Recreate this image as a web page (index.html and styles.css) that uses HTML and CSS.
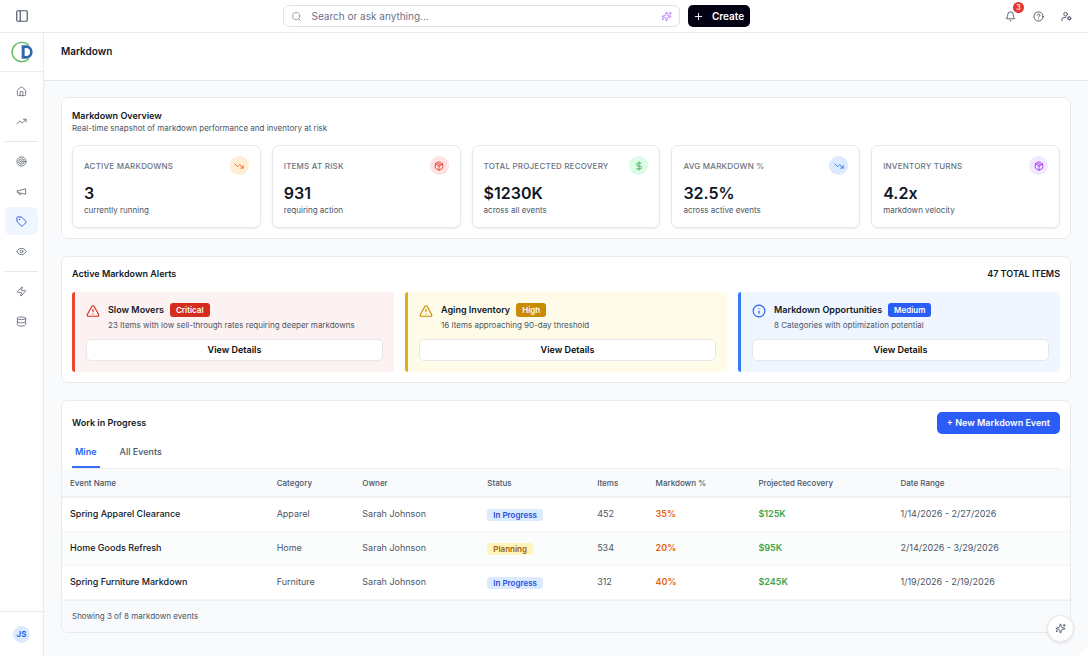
FILE: index.html
```html
<!DOCTYPE html>
<html lang="en">
<head>
<meta charset="utf-8">
<meta name="viewport" content="width=device-width, initial-scale=1">
<title>Markdown</title>
<link rel="stylesheet" href="styles.css">
</head>
<body>
<svg class="defs" aria-hidden="true">
  <symbol id="i-panel" viewBox="0 0 24 24"><rect x="3" y="3" width="18" height="18" rx="2"/><path d="M9 3v18"/></symbol>
  <symbol id="i-search" viewBox="0 0 24 24"><circle cx="11" cy="11" r="8"/><path d="m21 21-4.3-4.3"/></symbol>
  <symbol id="i-sparkles" viewBox="0 0 24 24"><path d="M9.937 15.5A2 2 0 0 0 8.5 14.063l-6.135-1.582a.5.5 0 0 1 0-.962L8.5 9.936A2 2 0 0 0 9.937 8.5l1.582-6.135a.5.5 0 0 1 .963 0L14.063 8.5A2 2 0 0 0 15.5 9.937l6.135 1.581a.5.5 0 0 1 0 .964L15.5 14.063a2 2 0 0 0-1.437 1.437l-1.582 6.135a.5.5 0 0 1-.963 0z"/><path d="M20 3v4M22 5h-4M4 17v2M5 18H3"/></symbol>
  <symbol id="i-plus" viewBox="0 0 24 24"><path d="M5 12h14M12 5v14"/></symbol>
  <symbol id="i-bell" viewBox="0 0 24 24"><path d="M10.268 21a2 2 0 0 0 3.464 0"/><path d="M3.262 15.326A1 1 0 0 0 4 17h16a1 1 0 0 0 .74-1.673C19.41 13.956 18 12.499 18 8A6 6 0 0 0 6 8c0 4.499-1.411 5.956-2.738 7.326"/></symbol>
  <symbol id="i-help" viewBox="0 0 24 24"><circle cx="12" cy="12" r="10"/><path d="M9.09 9a3 3 0 0 1 5.83 1c0 2-3 3-3 3M12 17h.01"/></symbol>
  <symbol id="i-usercog" viewBox="0 0 24 24"><circle cx="10" cy="7" r="4"/><path d="M2 21v-2a5 5 0 0 1 5-5h4"/><circle cx="18" cy="16" r="3"/><path d="M18 12v1M18 19v1M22 16h-1M15 16h-1M20.8 13.2l-.7.7M15.9 18.1l-.7.7M20.8 18.8l-.7-.7M15.9 13.9l-.7-.7"/></symbol>
  <symbol id="i-home" viewBox="0 0 24 24"><path d="M15 21v-8a1 1 0 0 0-1-1h-4a1 1 0 0 0-1 1v8"/><path d="M3 10a2 2 0 0 1 .709-1.528l7-6a2 2 0 0 1 2.582 0l7 6A2 2 0 0 1 21 10v9a2 2 0 0 1-2 2H5a2 2 0 0 1-2-2z"/></symbol>
  <symbol id="i-up" viewBox="0 0 24 24"><path d="m22 7-8.5 8.5-5-5L2 17"/><path d="M16 7h6v6"/></symbol>
  <symbol id="i-down" viewBox="0 0 24 24"><path d="m22 17-8.5-8.5-5 5L2 7"/><path d="M16 17h6v-6"/></symbol>
  <symbol id="i-target" viewBox="0 0 24 24"><circle cx="12" cy="12" r="10"/><circle cx="12" cy="12" r="6"/><circle cx="12" cy="12" r="2"/></symbol>
  <symbol id="i-megaphone" viewBox="0 0 24 24"><path d="m3 11 18-5v12L3 14v-3z"/><path d="M11.6 16.8a3 3 0 1 1-5.8-1.6"/></symbol>
  <symbol id="i-tag" viewBox="0 0 24 24"><path d="M12.586 2.586A2 2 0 0 0 11.172 2H4a2 2 0 0 0-2 2v7.172a2 2 0 0 0 .586 1.414l8.704 8.704a2.426 2.426 0 0 0 3.42 0l6.58-6.58a2.426 2.426 0 0 0 0-3.42z"/><circle cx="7.5" cy="7.5" r=".5"/></symbol>
  <symbol id="i-eye" viewBox="0 0 24 24"><path d="M2.062 12.348a1 1 0 0 1 0-.696 10.75 10.75 0 0 1 19.876 0 1 1 0 0 1 0 .696 10.75 10.75 0 0 1-19.876 0"/><circle cx="12" cy="12" r="3"/></symbol>
  <symbol id="i-zap" viewBox="0 0 24 24"><path d="M4 14a1 1 0 0 1-.78-1.63l9.9-10.2a.5.5 0 0 1 .86.46l-1.92 6.02A1 1 0 0 0 13 10h7a1 1 0 0 1 .78 1.63l-9.9 10.2a.5.5 0 0 1-.86-.46l1.92-6.02A1 1 0 0 0 11 14z"/></symbol>
  <symbol id="i-db" viewBox="0 0 24 24"><ellipse cx="12" cy="5" rx="9" ry="3"/><path d="M3 5v14a9 3 0 0 0 18 0V5"/><path d="M3 12a9 3 0 0 0 18 0"/></symbol>
  <symbol id="i-box" viewBox="0 0 24 24"><path d="M11 21.73a2 2 0 0 0 2 0l7-4A2 2 0 0 0 21 16V8a2 2 0 0 0-1-1.73l-7-4a2 2 0 0 0-2 0l-7 4A2 2 0 0 0 3 8v8a2 2 0 0 0 1 1.73z"/><path d="M12 22V12M3.29 7 12 12l8.71-5M7.5 4.27l9 5.15"/></symbol>
  <symbol id="i-dollar" viewBox="0 0 24 24"><path d="M12 2v20M17 5H9.5a3.5 3.5 0 0 0 0 7h5a3.5 3.5 0 0 1 0 7H6"/></symbol>
  <symbol id="i-warn" viewBox="0 0 24 24"><path d="m21.73 18-8-14a2 2 0 0 0-3.48 0l-8 14A2 2 0 0 0 4 21h16a2 2 0 0 0 1.73-3"/><path d="M12 9v4M12 17h.01"/></symbol>
  <symbol id="i-info" viewBox="0 0 24 24"><circle cx="12" cy="12" r="10"/><path d="M12 16v-4M12 8h.01"/></symbol>
</svg>

<div class="app">
  <header class="topbar">
    <div class="topbar-left">
      <button class="icon-btn" type="button" aria-label="Toggle sidebar"><svg class="icon icon-lg"><use href="#i-panel"/></svg></button>
    </div>
    <div class="topbar-center">
      <div class="search">
        <svg class="icon search-icon"><use href="#i-search"/></svg>
        <input class="search-input" type="text" aria-label="Search" placeholder="Search or ask anything...">
        <svg class="icon search-ai"><use href="#i-sparkles"/></svg>
      </div>
      <button class="create" type="button"><svg class="icon"><use href="#i-plus"/></svg>Create</button>
    </div>
    <div class="topbar-right">
      <button class="icon-btn" type="button" aria-label="Notifications"><svg class="icon"><use href="#i-bell"/></svg><span class="count">3</span></button>
      <button class="icon-btn" type="button" aria-label="Help"><svg class="icon"><use href="#i-help"/></svg></button>
      <button class="icon-btn" type="button" aria-label="Account settings"><svg class="icon"><use href="#i-usercog"/></svg></button>
    </div>
  </header>

  <aside class="sidebar">
    <a class="logo" href="#" aria-label="Dashboard home">
      <svg class="logo-mark" viewBox="0 0 66 66">
        <path d="M54 14A29 29 0 1 0 54 52" fill="none" stroke="#5bb55a" stroke-width="4"/>
        <path fill="#2f66ae" fill-rule="evenodd" d="M32 13h13a20 20 0 0 1 0 40H32zM41 21v24h4a12 12 0 0 0 0-24z"/>
      </svg>
    </a>
    <nav class="nav">
      <a class="nav-item" href="#" aria-label="Home"><svg class="icon"><use href="#i-home"/></svg></a>
      <a class="nav-item" href="#" aria-label="Trends"><svg class="icon"><use href="#i-up"/></svg></a>
      <hr class="nav-rule">
      <a class="nav-item" href="#" aria-label="Goals"><svg class="icon"><use href="#i-target"/></svg></a>
      <a class="nav-item" href="#" aria-label="Promotions"><svg class="icon"><use href="#i-megaphone"/></svg></a>
      <a class="nav-item active" href="#" aria-label="Markdown"><svg class="icon"><use href="#i-tag"/></svg></a>
      <a class="nav-item" href="#" aria-label="Watch"><svg class="icon"><use href="#i-eye"/></svg></a>
      <hr class="nav-rule">
      <a class="nav-item" href="#" aria-label="Actions"><svg class="icon"><use href="#i-zap"/></svg></a>
      <a class="nav-item" href="#" aria-label="Data"><svg class="icon"><use href="#i-db"/></svg></a>
    </nav>
    <div class="sidebar-foot"><button class="avatar" type="button">JS</button></div>
  </aside>

  <main class="main">
    <div class="page-head"><h1 class="page-title">Markdown</h1></div>
    <div class="content">
      <section class="card overview">
        <h2 class="card-title">Markdown Overview</h2>
        <p class="card-sub">Real-time snapshot of markdown performance and inventory at risk</p>
        <div class="kpis">
          <article class="kpi"><div class="kpi-top"><h3 class="kpi-label">Active Markdowns</h3><span class="kpi-icon orange"><svg class="icon"><use href="#i-down"/></svg></span></div><p class="kpi-value">3</p><p class="kpi-note">currently running</p></article>
          <article class="kpi"><div class="kpi-top"><h3 class="kpi-label">Items at Risk</h3><span class="kpi-icon red"><svg class="icon"><use href="#i-box"/></svg></span></div><p class="kpi-value">931</p><p class="kpi-note">requiring action</p></article>
          <article class="kpi"><div class="kpi-top"><h3 class="kpi-label">Total Projected Recovery</h3><span class="kpi-icon green"><svg class="icon"><use href="#i-dollar"/></svg></span></div><p class="kpi-value">$1230K</p><p class="kpi-note">across all events</p></article>
          <article class="kpi"><div class="kpi-top"><h3 class="kpi-label">Avg Markdown %</h3><span class="kpi-icon blue"><svg class="icon"><use href="#i-down"/></svg></span></div><p class="kpi-value">32.5%</p><p class="kpi-note">across active events</p></article>
          <article class="kpi"><div class="kpi-top"><h3 class="kpi-label">Inventory Turns</h3><span class="kpi-icon purple"><svg class="icon"><use href="#i-box"/></svg></span></div><p class="kpi-value">4.2x</p><p class="kpi-note">markdown velocity</p></article>
        </div>
      </section>

      <section class="card alerts-card">
        <div class="card-row"><h2 class="card-title">Active Markdown Alerts</h2><span class="total">47 TOTAL ITEMS</span></div>
        <div class="alerts">
          <article class="alert critical">
            <div class="alert-body">
              <svg class="icon alert-icon"><use href="#i-warn"/></svg>
              <div><div class="alert-head"><h3 class="alert-title">Slow Movers</h3><span class="tag">Critical</span></div><p class="alert-text">23 Items with low sell-through rates requiring deeper markdowns</p></div>
            </div>
            <button class="details" type="button">View Details</button>
          </article>
          <article class="alert high">
            <div class="alert-body">
              <svg class="icon alert-icon"><use href="#i-warn"/></svg>
              <div><div class="alert-head"><h3 class="alert-title">Aging Inventory</h3><span class="tag">High</span></div><p class="alert-text">16 Items approaching 90-day threshold</p></div>
            </div>
            <button class="details" type="button">View Details</button>
          </article>
          <article class="alert medium">
            <div class="alert-body">
              <svg class="icon alert-icon"><use href="#i-info"/></svg>
              <div><div class="alert-head"><h3 class="alert-title">Markdown Opportunities</h3><span class="tag">Medium</span></div><p class="alert-text">8 Categories with optimization potential</p></div>
            </div>
            <button class="details" type="button">View Details</button>
          </article>
        </div>
      </section>

      <section class="card wip">
        <div class="wip-head"><h2 class="card-title">Work in Progress</h2><button class="primary" type="button">+ New Markdown Event</button></div>
        <div class="tabs" role="tablist">
          <button class="tab selected" type="button" role="tab" aria-selected="true">Mine</button>
          <button class="tab" type="button" role="tab" aria-selected="false">All Events</button>
        </div>
        <table class="events">
          <colgroup><col class="c-name"><col class="c-cat"><col class="c-owner"><col class="c-status"><col class="c-items"><col class="c-md"><col class="c-rec"><col class="c-date"></colgroup>
          <thead><tr><th>Event Name</th><th>Category</th><th>Owner</th><th>Status</th><th>Items</th><th>Markdown %</th><th>Projected Recovery</th><th>Date Range</th></tr></thead>
          <tbody>
            <tr><td class="name">Spring Apparel Clearance</td><td>Apparel</td><td>Sarah Johnson</td><td><span class="status progress">In Progress</span></td><td>452</td><td class="pct">35%</td><td class="money">$125K</td><td>1/14/2026 - 2/27/2026</td></tr>
            <tr><td class="name">Home Goods Refresh</td><td>Home</td><td>Sarah Johnson</td><td><span class="status planning">Planning</span></td><td>534</td><td class="pct">20%</td><td class="money">$95K</td><td>2/14/2026 - 3/29/2026</td></tr>
            <tr><td class="name">Spring Furniture Markdown</td><td>Furniture</td><td>Sarah Johnson</td><td><span class="status progress">In Progress</span></td><td>312</td><td class="pct">40%</td><td class="money">$245K</td><td>1/19/2026 - 2/19/2026</td></tr>
          </tbody>
        </table>
        <p class="wip-foot">Showing 3 of 8 markdown events</p>
      </section>
    </div>
  </main>
  <button class="assistant" type="button" aria-label="Open assistant"><svg class="icon"><use href="#i-sparkles"/></svg></button>
</div>
</body>
</html>
```
FILE: styles.css
```css
*, *::before, *::after { box-sizing: border-box; }
body {
  margin: 0;
  font-family: Inter, "Liberation Sans", sans-serif;
  font-size: 9px;
  line-height: 14px;
  color: #101828;
  background: #fff;
}
h1, h2, h3, p { margin: 0; font-size: inherit; font-weight: inherit; }
button, input { font: inherit; color: inherit; }
button { padding: 0; border: 0; background: none; cursor: pointer; }
a { color: inherit; text-decoration: none; }
.defs { position: absolute; width: 0; height: 0; }
.icon {
  width: 11px;
  height: 11px;
  flex: none;
  fill: none;
  stroke: currentColor;
  stroke-width: 2;
  stroke-linecap: round;
  stroke-linejoin: round;
}
.icon-lg { width: 14px; height: 14px; }

.app {
  display: grid;
  grid-template-columns: 44px minmax(0, 1fr);
  grid-template-rows: 33px minmax(0, 1fr);
  height: 100vh;
}

/* Top bar */
.topbar {
  grid-column: 1 / -1;
  display: flex;
  align-items: center;
  border-bottom: 1px solid #e9ebf0;
  background: #fff;
  color: #4a5565;
}
.topbar-left { display: flex; justify-content: center; width: 44px; }
.topbar-center { flex: 1; display: flex; justify-content: center; gap: 8px; }
.topbar-right { display: flex; padding: 0 8px; }
.icon-btn {
  position: relative;
  display: flex;
  align-items: center;
  justify-content: center;
  width: 28px;
  height: 22px;
}
.count {
  position: absolute;
  top: -3px;
  right: 0;
  width: 11px;
  height: 11px;
  border-radius: 50%;
  background: #e7352f;
  color: #fff;
  font-size: 7px;
  font-weight: 500;
  line-height: 11px;
  text-align: center;
}
.search {
  flex: 0 1 397px;
  display: flex;
  align-items: center;
  height: 22px;
  padding: 0 7px;
  border: 1px solid #dfe1e8;
  border-radius: 6px;
  background: #fff;
}
.search-icon { color: #99a1af; }
.search-input {
  flex: 1;
  min-width: 0;
  padding: 0 10px;
  border: 0;
  outline: 0;
  background: none;
  font-size: 10px;
}
.search-input::placeholder { color: #6a7282; opacity: 1; }
.search-ai { color: #b66dff; }
.create {
  display: flex;
  align-items: center;
  justify-content: center;
  gap: 8px;
  width: 62px;
  height: 22px;
  border-radius: 5px;
  background: #030213;
  color: #fff;
  font-size: 10px;
  font-weight: 600;
}

/* Sidebar */
.sidebar {
  display: flex;
  flex-direction: column;
  border-right: 1px solid #e9ebf0;
  background: #fff;
  color: #6a7282;
}
.logo {
  display: flex;
  align-items: center;
  justify-content: center;
  height: 39px;
  border-bottom: 1px solid #eceef1;
}
.logo-mark { width: 22px; height: 22px; }
.nav {
  flex: 1;
  display: flex;
  flex-direction: column;
  gap: 2px;
  padding: 5px;
}
.nav-item {
  display: flex;
  align-items: center;
  justify-content: center;
  height: 28px;
  border-radius: 6px;
}
.nav-item.active { background: #eff6ff; color: #2b52ec; }
.nav-rule { width: 100%; height: 1px; margin: 4px 0 3px; border: 0; background: #e5e7eb; }
.sidebar-foot {
  display: flex;
  align-items: center;
  justify-content: center;
  height: 45px;
  border-top: 1px solid #e5e7eb;
}
.avatar {
  width: 17px;
  height: 17px;
  border-radius: 50%;
  background: #dbeafe;
  color: #2458e8;
  font-size: 8px;
  font-weight: 600;
}

/* Page */
.main {
  overflow: auto;
  background: #f9fafc;
  border-bottom-right-radius: 16px;
}
.page-head {
  height: 48px;
  padding: 11px 17px;
  border-bottom: 1px solid #e5e7eb;
  background: #fff;
}
.page-title { font-size: 10px; font-weight: 600; }
.content {
  display: flex;
  flex-direction: column;
  gap: 17px;
  padding: 16px 17px 23px;
}
.card {
  padding: 10px;
  border: 1px solid #e8eaee;
  border-radius: 7px;
  background: #fff;
}
.overview { padding-top: 11px; }
.card-title, .total { font-weight: 600; }
.card-sub { font-size: 8px; line-height: 11px; color: #4a5565; }

.kpis {
  display: grid;
  grid-template-columns: repeat(5, minmax(0, 1fr));
  gap: 11px;
  margin-top: 11px;
}
.kpi {
  padding: 10px 11px 11px;
  border: 1px solid #e5e7eb;
  border-radius: 7px;
  box-shadow: 0 1px 2px rgba(0, 0, 0, 0.08);
}
.kpi-top { display: flex; align-items: center; justify-content: space-between; }
.kpi-label {
  font-size: 8px;
  font-weight: 500;
  text-transform: uppercase;
  letter-spacing: 0.2px;
  color: #6a7282;
}
.kpi-icon {
  display: flex;
  align-items: center;
  justify-content: center;
  width: 19px;
  height: 19px;
  border-radius: 50%;
}
.kpi-icon .icon { width: 10px; height: 10px; }
.orange { background: #ffedd4; color: #f0590a; }
.red { background: #ffe2e2; color: #e03020; }
.green { background: #dcfce7; color: #3da94b; }
.blue { background: #dbeafe; color: #2c66f0; }
.purple { background: #f3e8ff; color: #9428ef; }
.kpi-value { margin-top: 7px; font-size: 16px; font-weight: 600; line-height: 22px; }
.kpi-note { font-size: 8px; line-height: 12px; color: #4a5565; }

/* Alerts */
.card-row { display: flex; align-items: center; justify-content: space-between; }
.alerts {
  display: grid;
  grid-template-columns: repeat(3, minmax(0, 1fr));
  gap: 11px;
  margin-top: 11px;
}
.alert {
  padding: 11px;
  border-left: 3px solid;
  border-radius: 3px;
}
.alert-body { display: flex; gap: 8px; }
.alert-icon { width: 14px; height: 14px; margin-top: 1px; }
.alert-head { display: flex; align-items: center; gap: 6px; color: #101828; }
.alert-title { font-weight: 600; }
.tag {
  padding: 0 6px;
  border-radius: 3px;
  color: #fff;
  font-size: 8px;
  font-weight: 600;
}
.alert-text { margin-top: 2px; font-size: 8px; line-height: 12px; color: #4a5565; }
.details {
  width: 100%;
  height: 22px;
  margin-top: 8px;
  border: 1px solid #e5e7eb;
  border-radius: 5px;
  background: #fff;
  color: #0a0a0a;
  font-weight: 600;
}
.critical { border-color: #ee4437; background: #fdf2f2; }
.critical .alert-icon { color: #d92d20; }
.critical .tag { background: #d42d20; }
.high { border-color: #e7b008; background: #fefce8; }
.high .alert-icon { color: #cd8900; }
.high .tag { background: #c98a04; }
.medium { border-color: #3b7bfa; background: #eff6ff; }
.medium .alert-icon { color: #2b5cf3; }
.medium .tag { background: #2b5cf3; }

/* Work in progress */
.wip { padding: 0; overflow: hidden; }
.wip-head {
  display: flex;
  align-items: center;
  justify-content: space-between;
  padding: 11px 10px 6px;
}
.primary {
  height: 22px;
  padding: 0 10px;
  border-radius: 5px;
  background: #2b5cf6;
  color: #fff;
  font-weight: 600;
}
.tabs {
  display: flex;
  gap: 17px;
  margin: 0 10px;
  border-bottom: 1px solid #eceef1;
}
.tab {
  height: 28px;
  padding: 0 3px 3px;
  border-bottom: 2px solid transparent;
  color: #4a5565;
  font-weight: 500;
}
.tab.selected { border-color: #3b6ef8; color: #2b63f6; font-weight: 600; }
.events { width: 100%; border-collapse: collapse; table-layout: fixed; }
.c-name { width: 20.5%; }
.c-cat { width: 8.5%; }
.c-owner { width: 12.4%; }
.c-status { width: 10.9%; }
.c-items { width: 5.8%; }
.c-md { width: 10.2%; }
.c-rec { width: 14.1%; }
.events th, .events td { padding: 0 8px; text-align: left; white-space: nowrap; }
.events th {
  height: 28px;
  border-bottom: 2px solid #eef0f3;
  background: #f9fafb;
  color: #4a5565;
  font-size: 8px;
  font-weight: 500;
}
.events td { height: 34px; border-bottom: 1px solid #f3f4f6; color: #4a5565; }
.events tr:nth-child(even) td { background: #fbfdfc; }
.events .name { color: #101828; font-weight: 500; }
.events .pct { color: #e8610f; font-weight: 600; }
.events .money { color: #3da548; font-weight: 600; }
.status {
  display: inline-block;
  padding: 0 6px;
  border-radius: 3px;
  font-size: 8px;
  font-weight: 600;
  line-height: 12px;
  vertical-align: middle;
}
.progress { background: #dbeafe; color: #1f4fe0; }
.planning { background: #fef4bd; color: #a16207; }
.wip-foot {
  padding: 9px 10px 10px;
  border-top: 1px solid #eceef1;
  background: #f9fafb;
  color: #4a5565;
  font-size: 8px;
  line-height: 12px;
}
.assistant {
  position: fixed;
  right: 14px;
  bottom: 14px;
  display: flex;
  align-items: center;
  justify-content: center;
  width: 27px;
  height: 27px;
  border: 1px solid #e5e7eb;
  border-radius: 50%;
  background: #fff;
  color: #4a5565;
  box-shadow: 0 1px 3px rgba(0, 0, 0, 0.12);
}
```
